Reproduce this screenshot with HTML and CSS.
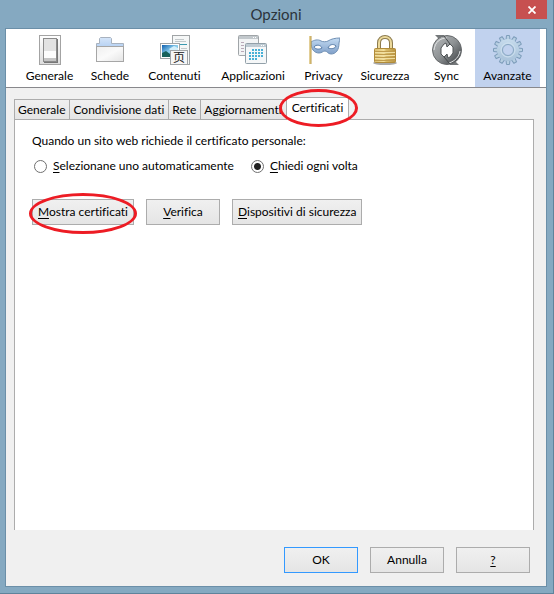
FILE: index.html
```
<!DOCTYPE html>
<html lang="it">
<head>
    <meta charset="UTF-8">
    <link rel="stylesheet" href="styles.css">
    <title>Opzioni</title>
</head>
<body>
<div class="window">
    <div class="titlebar">
        <h1>Opzioni</h1>
        <button type="button" class="close" aria-label="Chiudi">
            <svg width="8" height="8" viewBox="0 0 8 8"><path d="M0.5 0.5L7.5 7.5M7.5 0.5L0.5 7.5" stroke="#fff" stroke-width="1.8"/></svg>
        </button>
    </div>

    <div class="client">
        <div class="toolbar">
            <button type="button" class="tool">
                <svg width="32" height="32" viewBox="0 0 32 32">
                    <defs>
                        <linearGradient id="grigio" x1="0" y1="0" x2="0" y2="1"><stop offset="0" stop-color="#fff"/><stop offset="1" stop-color="#dcdcdc"/></linearGradient>
                    </defs>
                    <rect x="5.500" y="1.500" width="21" height="29" fill="url(#grigio)" stroke="#a3a3a3"/>
                    <path d="M10 28h13V5h1v24H10z" fill="#777"/>
                    <rect x="9.500" y="4.500" width="13" height="23" fill="#e2e2e2" stroke="#8b8b8b"/>
                    <path d="M10 17h12v7H10z" fill="#fcfcfc"/>
                    <path d="M10 24h12v3H10z" fill="#c4c4c4"/>
                </svg>
                <span>Generale</span>
            </button>
            <button type="button" class="tool">
                <svg width="32" height="32" viewBox="0 0 32 32">
                    <defs>
                        <linearGradient id="blu" x1="0" y1="0" x2="0" y2="1"><stop offset="0" stop-color="#d5e5f9"/><stop offset="1" stop-color="#b9d3f3"/></linearGradient>
                        <linearGradient id="carta" x1="0" y1="0" x2="1" y2="1"><stop offset="0" stop-color="#efefef"/><stop offset="0.5" stop-color="#fafafa"/><stop offset="1" stop-color="#e4e4e4"/></linearGradient>
                    </defs>
                    <path d="M2.500 12V9.500h3v-5l1-1h10l1 1v5h12V12" fill="url(#blu)" stroke="#a8b2bf"/>
                    <rect x="2.500" y="12.500" width="27" height="15" fill="url(#carta)" stroke="#a6a6a6"/>
                </svg>
                <span>Schede</span>
            </button>
            <button type="button" class="tool">
                <svg width="32" height="32" viewBox="0 0 32 32">
                    <defs>
                        <linearGradient id="cielo" x1="0" y1="0" x2="1" y2="1"><stop offset="0" stop-color="#0f5fae"/><stop offset="0.500" stop-color="#8ed1ef"/><stop offset="1" stop-color="#2077a8"/></linearGradient>
                    </defs>
                    <rect x="13.500" y="1.500" width="17" height="29" fill="#f5f7f7" stroke="#a0a4a6"/>
                    <path d="M16 5.500h9M16 7.500h11M22 14.500h6" stroke="#c3c9cb"/>
                    <path d="M16 10.500h12" stroke="#3b9ab0"/>
                    <rect x="1.500" y="9.500" width="19" height="15" fill="#fff" stroke="#a0a4a6"/>
                    <path d="M3 11h16v12H3z" fill="url(#cielo)"/>
                    <path d="M3 19l4-2 4 3 8 1v2H3z" fill="#17625c"/>
                    <path d="M10 15l5-3 4 2v3l-6 1z" fill="#d4effa"/>
                    <rect x="11.500" y="16.500" width="17" height="14" fill="#f6f6f6" stroke="#a0a4a6"/>
                    <text x="14" y="28" class="glyph">页</text>
                </svg>
                <span>Contenuti</span>
            </button>
            <button type="button" class="tool">
                <svg width="32" height="32" viewBox="0 0 32 32">
                    <rect x="1.500" y="1.500" width="20" height="20" rx="1" fill="#f2f4f5" stroke="#a0a5a8"/>
                    <path d="M2 2h19v3H2z" fill="#c2c8cc"/>
                    <path d="M16 3.500h4" stroke="#fff" stroke-dasharray="1 1"/>
                    <path d="M4 8.500h3M4 11.500h3M4 14.500h3M4 17.500h3" stroke="#b9a9b8" stroke-width="1"/>
                    <rect x="8.500" y="9.500" width="21" height="20" rx="1" fill="#f5f7f8" stroke="#92a0a9"/>
                    <path d="M9 10h20v3H9z" fill="#bfcbd3"/>
                    <path d="M24 11.500h4" stroke="#fff" stroke-dasharray="1 1"/>
                    <path d="M15 16h12M12 19h15M12 22h15M12 25h9" stroke="#47b0d6" stroke-width="2" stroke-dasharray="2 1"/>
                </svg>
                <span>Applicazioni</span>
            </button>
            <button type="button" class="tool">
                <svg width="32" height="32" viewBox="0 0 32 32">
                    <defs>
                        <linearGradient id="seta" x1="0" y1="0" x2="0" y2="1"><stop offset="0" stop-color="#c4dcf3"/><stop offset="1" stop-color="#7f9fc8"/></linearGradient>
                    </defs>
                    <path d="M3 8c3-2 7-3 10-1 2 1 5 1 7 0 3-2 7-3 12-3 0 2-1 3-1 5 0 7-3 11-8 11-3 0-4-3-6-3s-3 2-6 2c-5 0-8-4-8-11z" fill="url(#seta)" stroke="#7090b4"/>
                    <path d="M6 13c2-3 7-2 8 1-3 2-7 1-8-1zM28 12c-3-3-7-1-8 2 3 1 7 1 8-2z" fill="#fff" stroke="#587da8"/>
                    <path d="M2.500 2v28" stroke="#b9984b" stroke-width="2"/>
                    <path d="M2 2v28" stroke="#e8d086"/>
                </svg>
                <span>Privacy</span>
            </button>
            <button type="button" class="tool">
                <svg width="32" height="32" viewBox="0 0 32 32">
                    <defs>
                        <linearGradient id="oro" x1="0" y1="0" x2="1" y2="0"><stop offset="0" stop-color="#d9bc6a"/><stop offset="0.450" stop-color="#f3df9b"/><stop offset="0.550" stop-color="#d9bc68"/><stop offset="1" stop-color="#b8923f"/></linearGradient>
                    </defs>
                    <ellipse cx="16" cy="29" rx="12" ry="2" fill="#aaa"/>
                    <path d="M10 15V9c0-8 12-8 12 0v6" fill="none" stroke="#8c7b4e" stroke-width="4"/>
                    <path d="M10 15V9c0-8 12-8 12 0v6" fill="none" stroke="#ecd99b" stroke-width="2"/>
                    <rect x="5.500" y="14.500" width="21" height="14" rx="1" fill="url(#oro)" stroke="#b08b3a"/>
                    <path d="M6 17.500h20M6 20.500h20M6 23.500h20M6 26.500h20" stroke="#c09c4c"/>
                    <path d="M6 18.500h20M6 21.500h20M6 24.500h20" stroke="#f0dea0"/>
                </svg>
                <span>Sicurezza</span>
            </button>
            <button type="button" class="tool">
                <svg width="32" height="32" viewBox="0 0 32 32">
                    <defs>
                        <linearGradient id="acciaio" x1="0" y1="0" x2="1" y2="1"><stop offset="0" stop-color="#b9bcbe"/><stop offset="0.500" stop-color="#8d9193"/><stop offset="1" stop-color="#33373a"/></linearGradient>
                    </defs>
                    <path d="M4 1h9v9zM28 31h-9v-9z" fill="#74787a"/>
                    <circle cx="16" cy="16" r="14.500" fill="url(#acciaio)" stroke="#66696b"/>
                    <path d="M15 9l1 4 3-3 3 3v6l-3 4-2 1-1-4-3 3-3-3v-6l3-4z" fill="#fff" stroke="#505456"/>
                    <path d="M3 16C4 8 9 4 16 4M29 17c-1 6-5 10-11 12" fill="none" stroke="#e3e5e6"/>
                    <path d="M13 2l6 8M19 30l-6-7" stroke="#44484a"/>
                </svg>
                <span>Sync</span>
            </button>
            <button type="button" class="tool current">
                <svg width="32" height="32" viewBox="0 0 32 32">
                    <defs>
                        <linearGradient id="gomma" x1="0" y1="0" x2="0" y2="1"><stop offset="0" stop-color="#c6dbec"/><stop offset="1" stop-color="#a9c3da"/></linearGradient>
                    </defs>
                    <g fill="#b7cfe3" stroke="#7d9dba">
                        <path id="dente" d="M14 6l.5-4.500h3L18 6v20l-.5 4.500h-3L14 26z"/>
                        <use href="#dente" transform="rotate(30 16 16)"/>
                        <use href="#dente" transform="rotate(60 16 16)"/>
                        <use href="#dente" transform="rotate(90 16 16)"/>
                        <use href="#dente" transform="rotate(120 16 16)"/>
                        <use href="#dente" transform="rotate(150 16 16)"/>
                    </g>
                    <circle cx="16" cy="16" r="11" fill="url(#gomma)"/>
                    <circle cx="16" cy="16" r="7" fill="none" stroke="#d0e2f0"/>
                    <circle cx="16" cy="16" r="5.500" fill="#c1d2ee" stroke="#88a7c2"/>
                </svg>
                <span>Avanzate</span>
            </button>
        </div>

        <div class="content">
            <div class="tabs" role="tablist">
                <button type="button" role="tab" class="tab">Generale</button>
                <button type="button" role="tab" class="tab">Condivisione dati</button>
                <button type="button" role="tab" class="tab">Rete</button>
                <button type="button" role="tab" class="tab">Aggiornamenti</button>
                <button type="button" role="tab" class="tab selected marked" aria-selected="true">Certificati</button>
            </div>
            <div class="panel" role="tabpanel">
                <p>Quando un sito web richiede il certificato personale:</p>
                <div class="choices">
                    <input type="radio" name="cert" id="auto"><label for="auto"><u>S</u>elezionane uno automaticamente</label>
                    <input type="radio" name="cert" id="ask" checked><label for="ask"><u>C</u>hiedi ogni volta</label>
                </div>
                <div class="actions">
                    <button type="button" class="btn marked"><u>M</u>ostra certificati</button>
                    <button type="button" class="btn"><u>V</u>erifica</button>
                    <button type="button" class="btn"><u>D</u>ispositivi di sicurezza</button>
                </div>
            </div>
        </div>

        <div class="footer">
            <button type="button" class="btn default">OK</button>
            <button type="button" class="btn">Annulla</button>
            <button type="button" class="btn"><u>?</u></button>
        </div>
    </div>
</div>
</body>
</html>
```
FILE: styles.css
```
*{
    box-sizing: border-box;
}
body{
    margin: 0;
    font: 12px/16px Lato, sans-serif;
    font-variant-ligatures: none;
    color: #000;
}
button{
    font: inherit;
    font-variant-ligatures: none;
    color: inherit;
    white-space: nowrap;
}
u{
    text-underline-offset: 2px;
}
.window{
    display: flex;
    flex-direction: column;
    min-height: 100vh;
    padding: 0 6px 6px 5px;
    background: #85a9c1;
    border-right: 1px solid #5f839b;
    border-bottom: 1px solid #5f839b;
}

/* title bar */
.titlebar{
    position: relative;
    height: 28px;
}
.titlebar h1{
    margin: 0;
    font-size: 15px;
    font-weight: normal;
    line-height: 28px;
    text-align: center;
    color: #2b343b;
}
.close{
    position: absolute;
    top: 0;
    right: 0;
    display: flex;
    align-items: center;
    justify-content: center;
    width: 31px;
    height: 19px;
    padding: 0;
    border: 0;
    background: #c75050;
}
.client{
    flex: 1;
    display: flex;
    flex-direction: column;
    border: 1px solid #6b8fa8;
    background: #f0f0f0;
}

/* categories */
.toolbar{
    display: grid;
    grid-template-columns: 65fr 56fr 73fr 84fr 57fr 66fr 57fr 65fr;
    padding: 0 6px 0 11px;
    background: #fff;
    border-bottom: 1px solid #88888c;
}
.tool{
    display: flex;
    flex-direction: column;
    align-items: center;
    gap: 2px;
    min-width: 0;
    height: 58px;
    padding: 5px 0 0;
    border: 0;
    background: none;
}
.tool svg{
    flex: none;
}
.current{
    background: #c1d2ee;
}
.glyph{
    font: 12px "Noto Sans CJK SC", sans-serif;
    fill: #222;
}

/* tabs */
.content{
    flex: 1;
    display: flex;
    flex-direction: column;
    padding: 9px 12px 0 8px;
}
.tabs{
    display: flex;
    align-items: flex-end;
}
.tab{
    height: 20px;
    padding: 0 4px 0 3px;
    border: 1px solid #acacac;
    border-bottom: 0;
    border-right: 0;
    background: linear-gradient(#f0f0f0, #e5e5e5);
}
.selected{
    height: 23px;
    padding: 0 5px 2px;
    margin-bottom: -1px;
    border-right: 1px solid #acacac;
    background: #fff;
}
.panel{
    flex: 1;
    padding: 13px 17px;
    border: 1px solid #acacac;
    border-bottom: 0;
    background: #fff;
}
.panel p{
    margin: 0 0 9px;
}
.choices{
    display: flex;
    align-items: center;
}
.choices input{
    appearance: none;
    flex: none;
    width: 13px;
    height: 13px;
    margin: 0 6px 0 2px;
    border: 1px solid #707070;
    border-radius: 50%;
    background: #fff;
}
.choices input:checked{
    background: radial-gradient(#222 3px, #fff 4px);
}
.choices label{
    margin-right: 15px;
}
.actions{
    display: flex;
    gap: 12px;
    margin-top: 25px;
}

/* buttons */
.btn{
    min-width: 74px;
    height: 26px;
    padding: 0 5px;
    border: 1px solid #acacac;
    background: linear-gradient(#f0f0f0, #e5e5e5);
}
.default{
    border-color: #3399ff;
}
.marked{
    position: relative;
}
.marked::after{
    content: "";
    position: absolute;
    inset: -7px -4px -10px;
    border: 3px solid #ed1c24;
    border-radius: 50%;
}
.selected.marked::after{
    inset: -9px -10px -7px -8px;
}
.footer{
    display: flex;
    justify-content: flex-end;
    gap: 12px;
    padding: 17px 16px 13px;
}
```
